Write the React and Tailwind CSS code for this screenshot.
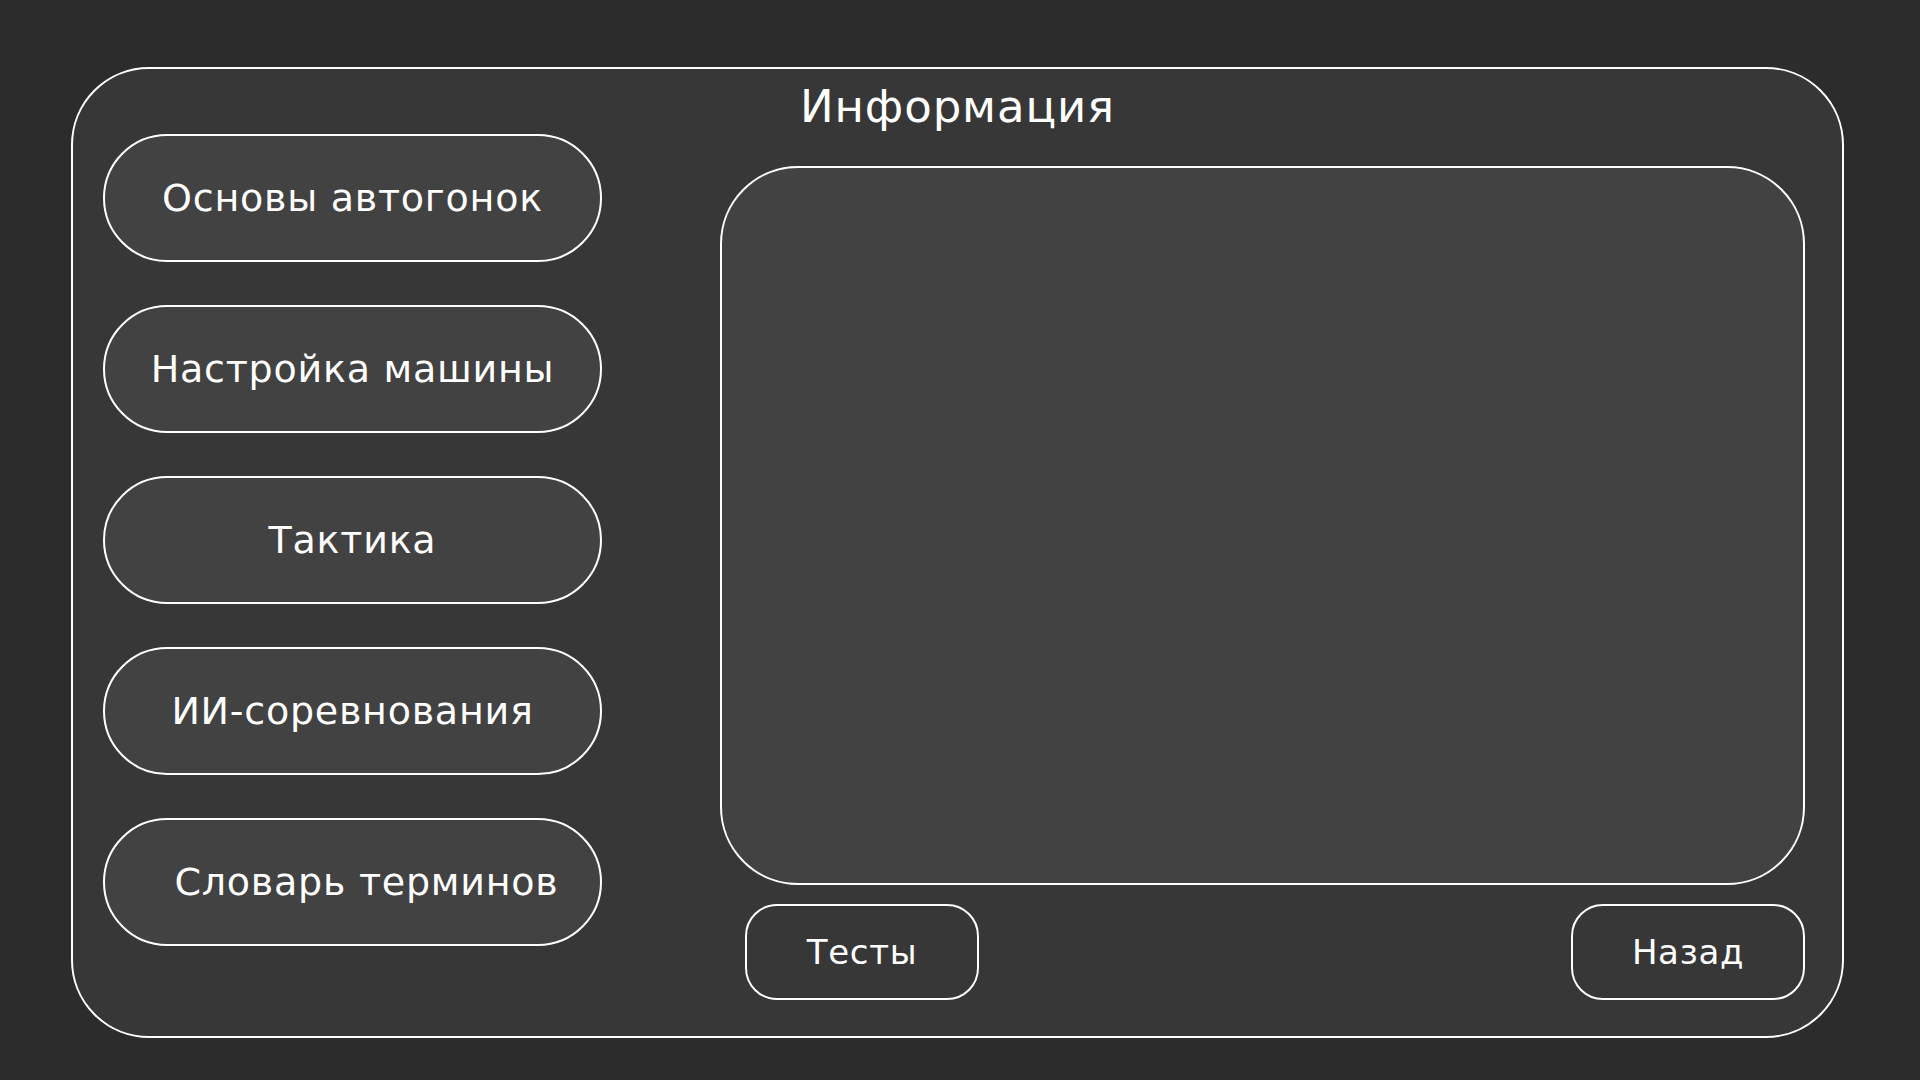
import React from 'react';

const topics = [
    'Основы автогонок',
    'Настройка машины',
    'Тактика',
    'ИИ-соревнования',
    'Словарь терминов',
];

const App = () => {
    return (
        <div
            className="w-full h-[1080px] bg-[#2c2c2c] pt-[67px] pl-[71px] text-white"
            style={{ fontFamily: '"DejaVu Sans", "Liberation Sans", sans-serif' }}
        >
            <div className="w-[1773px] h-[971px] rounded-[78px] border-2 border-white bg-[#373737] flex flex-col">
                {/* Title */}
                <div className="h-[65px] flex items-center justify-center pt-[9px]">
                    <h1 className="text-[45px] leading-none font-normal tracking-[0.02em]">Информация</h1>
                </div>

                <div className="flex pl-[30px]">
                    {/* Topic buttons */}
                    <div className="flex flex-col gap-[43px]">
                        {topics.map((t, i) => (
                            <button
                                key={t}
                                className={
                                    i === 4
                                        ? 'w-[499px] h-[128px] rounded-full border-2 border-white bg-[#424242] text-[38px] leading-none tracking-[0.02em] text-white pl-[28px]'
                                        : 'w-[499px] h-[128px] rounded-full border-2 border-white bg-[#424242] text-[38px] leading-none tracking-[0.02em] text-white'
                                }
                            >
                                {t}
                            </button>
                        ))}
                    </div>

                    {/* Content area */}
                    <div className="ml-[118px] mt-[32px] flex flex-col">
                        <div className="w-[1085px] h-[719px] rounded-[78px] border-2 border-white bg-[#424242]"></div>
                        <div className="mt-[19px] flex justify-between pl-[25px]">
                            <button className="w-[234px] h-[96px] rounded-[32px] border-2 border-white text-[34px] leading-none tracking-[0.02em] text-white">
                                Тесты
                            </button>
                            <button className="w-[234px] h-[96px] rounded-[32px] border-2 border-white text-[34px] leading-none tracking-[0.02em] text-white">
                                Назад
                            </button>
                        </div>
                    </div>
                </div>
            </div>
        </div>
    );
};

export default App;
